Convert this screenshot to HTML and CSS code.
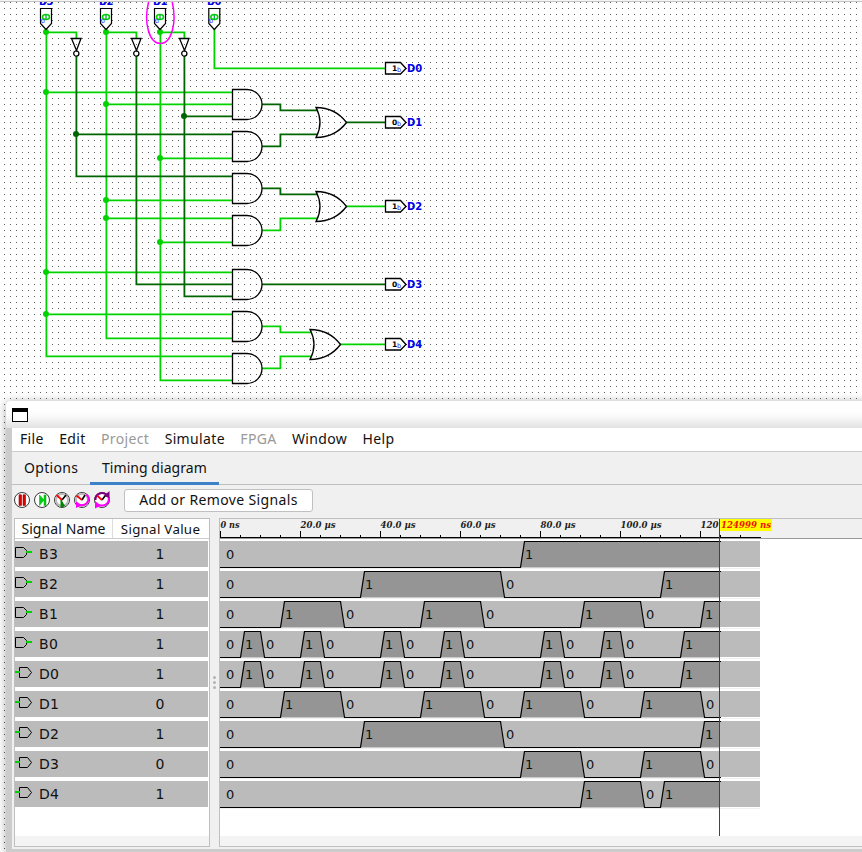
FILE: index.html
```html
<!DOCTYPE html>
<html lang="en">
<head>
<meta charset="utf-8">
<title>Timing diagram</title>
<link rel="stylesheet" href="styles.css">
</head>
<body>
<svg class="circuit" viewBox="0 0 862 401" width="862" height="401">
  <defs>
    <path id="and" d="M.5 -14.5H15a15 15 0 0 1 0 30H.5Z"/>
    <path id="or" d="M0 -14.5Q19 -14.5 30.5 .5Q19 15.5 0 15.5Q8 .5 0 -14.5Z"/>
    <g id="inv"><path d="M-4.5 -11.5H5L.5 .5Z"/><circle cx=".3" cy="3.5" r="2.6"/></g>
    <g id="inpin">
      <path class="shape" d="M-5.5 8.5H5.5V23.5L0 29.5L-5.5 23.5Z"/>
      <ellipse class="ring" cx="0" cy="17" rx="3.5" ry="2.5"/>
      <path class="ringbar" d="M0 14.5V19.5"/>
      <text class="sub" transform="translate(-4.6 23.5) rotate(-20)">b</text>
    </g>
    <path id="outpin" class="pin" d="M.5 -5.5H15.5L21 .5L15.5 6H.5Z"/>
  </defs>
  <g class="labels">
    <text x="39" y="4.5">B3</text><text x="99" y="4.5">B2</text><text x="153" y="4.5">B1</text><text x="207" y="4.5">B0</text>
  </g>
  <rect class="edge" width="862" height="2"/>
  <path class="edgeline" d="M0 1.5H862"/>
  <g class="wire on">
    <path d="M46.4 29V356.4H233M46.4 32.4H76.4V39M46.4 92.4H233M46.4 272.4H233M46.4 314.4H233"/>
    <path d="M106.4 29V338.4H233M106.4 32.4H136.4V39M106.4 104.4H233M106.4 200.4H233M106.4 218.4H233"/>
    <path d="M160.4 29V380.4H233M160.4 32.4H184.4V39M160.4 158.4H233M160.4 242.4H233"/>
    <path d="M214.4 29V68.4H385M262 230.4H280.4V218.4H318M346 206.4H385M262 326.4H280.4V332.4H312M262 368.4H280.4V356.4H312M340 344.4H385"/>
  </g>
  <g class="wire off">
    <path d="M76.4 56V176.4H233M76.4 134.4H233M136.4 56V284.4H233M184.4 56V296.4H233M184.4 116.4H233"/>
    <path d="M262 104.4H280.4V110.4H318M262 146.4H280.4V134.4H318M346 122.4H385M262 188.4H280.4V194.4H318M262 284.4H385"/>
  </g>
  <g class="dot on">
    <circle cx="46" cy="32" r="3"/><circle cx="46" cy="92" r="3"/><circle cx="46" cy="272" r="3"/><circle cx="46" cy="314" r="3"/>
    <circle cx="106" cy="32" r="3"/><circle cx="106" cy="104" r="3"/><circle cx="106" cy="200" r="3"/><circle cx="106" cy="218" r="3"/>
    <circle cx="160" cy="32" r="3"/><circle cx="160" cy="158" r="3"/><circle cx="160" cy="242" r="3"/>
  </g>
  <g class="dot off"><circle cx="184" cy="116" r="3"/><circle cx="76" cy="134" r="3"/></g>
  <g class="gate">
    <use href="#and" x="232" y="104"/><use href="#and" x="232" y="146"/><use href="#and" x="232" y="188"/><use href="#and" x="232" y="230"/>
    <use href="#and" x="232" y="284"/><use href="#and" x="232" y="326"/><use href="#and" x="232" y="368"/>
    <use href="#or" x="316" y="122"/><use href="#or" x="316" y="206"/><use href="#or" x="310" y="344"/>
    <use href="#inv" x="76" y="50"/><use href="#inv" x="136" y="50"/><use href="#inv" x="184" y="50"/>
    <use href="#outpin" x="385" y="68"/><use href="#outpin" x="385" y="122"/><use href="#outpin" x="385" y="206"/><use href="#outpin" x="385" y="284"/><use href="#outpin" x="385" y="344"/>
  </g>
  <use href="#inpin" x="46"/><use href="#inpin" x="106"/><use href="#inpin" x="160"/><use href="#inpin" x="214.3"/>
  <path class="halo" d="M148.6 2C143.5 22 149 43.5 160.4 43.5S177 22 172.2 2"/>
  <g class="bits">
    <text x="392" y="70.5">1</text><text x="392" y="124.5">0</text><text x="392" y="208.5">1</text><text x="392" y="286.5">0</text><text x="392" y="346.5">1</text>
  </g>
  <g class="sub">
    <text x="397" y="72.3">b</text><text x="397" y="126.3">b</text><text x="397" y="210.3">b</text><text x="397" y="288.3">b</text><text x="397" y="348.3">b</text>
  </g>
  <g class="labels">
    <text x="407" y="72">D0</text><text x="407" y="126">D1</text><text x="407" y="210">D2</text><text x="407" y="288">D3</text><text x="407" y="348">D4</text>
  </g>
</svg>

<div class="window">
  <div class="titlebar"><i class="winicon"></i></div>
  <div class="content">
    <nav class="menu"><span>File</span><span>Edit</span><span class="disabled">Project</span><span>Simulate</span><span class="disabled">FPGA</span><span>Window</span><span>Help</span></nav>
    <div class="tabs"><span class="tab">Options</span><span class="tab active">Timing diagram</span></div>
    <div class="toolbar">
      <svg viewBox="0 0 16 16"><circle class="face" cx="8" cy="8" r="7.5"/><path d="M5 2.8h2.5v10.6H5zM9 2.8h2.5v10.6H9z" fill="#e00000" stroke="#900" stroke-width=".6"/></svg>
      <svg viewBox="0 0 16 16"><circle class="face" cx="8" cy="8" r="7.5"/><path d="M5.5 3L10 8l-4.500 5.500zM10 3h2v10.500h-2z" fill="#00cf16" stroke="#0a0" stroke-width=".5"/></svg>
      <svg viewBox="0 0 16 16"><circle class="face" cx="8" cy="8" r="7.500"/><circle class="rim" cx="8" cy="8" r="6"/><path d="M7 8v7l3.500-1z" fill="#008500" stroke="#008500"/><path class="hand" d="M8 8l4-5"/><path class="redhand" d="M2.500 3L8 8"/></svg>
      <svg viewBox="0 0 16 16"><circle class="face" cx="8" cy="8" r="7.500"/><circle class="rim" cx="8" cy="8" r="6"/><path d="M12.500 2.500C17 7 13.500 14.500 5 13" class="loop"/><path d="M2 9.500V16l6-3z" fill="#f0f"/><path class="hand" d="M8 8l3-5"/><path class="redhand" d="M2.500 3.500L8 8"/></svg>
      <svg viewBox="0 0 16 16"><circle class="face" cx="8" cy="8" r="7.500"/><path d="M14.500 5C16 11 11 15 5 13" class="loop"/><path d="M1.500 8C1 2 8-1 13 3" fill="none" stroke="#800080" stroke-width="2"/><path d="M15.500-1v7L9.500 4z" fill="#800080"/><path d="M1 9v7.500l6-3z" fill="#f0f"/><path class="hand" d="M8 8l3-4"/><path class="redhand" d="M3 3.500L8 8"/></svg>
      <button class="btn">Add or Remove Signals</button>
    </div>
    <div class="panes">
      <div class="table">
        <div class="thead"><span>Signal Name</span><span>Signal Value</span></div>
        <div class="rows" id="rows"></div>
        <div class="scroll"></div>
      </div>
      <div class="splitter"><i></i><i></i><i></i></div>
      <div class="chart">
        <svg id="ruler" class="ruler" width="642" height="20"></svg>
        <svg id="waves" class="waves" width="642" height="297"></svg>
        <div class="scroll"></div>
      </div>
    </div>
  </div>
</div>
<script src="app.js"></script>
</body>
</html>
```
FILE: styles.css
```css
body {
  margin: 0;
  width: 862px;
  height: 852px;
  overflow: hidden;
  color: #111;
  font: 14px/20px "Noto Sans", sans-serif;
  background: #fff conic-gradient(from 90deg at 1px 1px, transparent 0 180deg, #606060 180deg 270deg, transparent 270deg) 4px 2px / 6px 6px;
}
.circuit { display: block; }
.edge { fill: #f4f4f4; }
.edgeline { stroke: #c4c4c4; }
.wire { fill: none; stroke-width: 1.8; }
.wire.on { stroke: #00d200; }
.wire.off { stroke: #006400; }
.dot.on { fill: #00d200; }
.dot.off { fill: #006400; }
.gate { fill: none; stroke: #000; stroke-width: 1.3; }
.pin { fill: #fff; }
.shape { fill: #fff; stroke: #000; stroke-width: 1.2; }
.ring { fill: #fff; stroke: #00d200; stroke-width: 1.5; }
.ringbar { stroke: #009c40; stroke-width: 1.2; }
.halo { fill: none; stroke: #f0f; stroke-width: 1.5; }
.labels { font: bold 10px "DejaVu Sans", sans-serif; fill: #0000e8; }
.bits { font: bold 7.5px "DejaVu Sans", sans-serif; }
.sub { font: 6.5px "DejaVu Sans", sans-serif; fill: #2020ff; }

.window {
  display: flex;
  flex-direction: column;
  box-sizing: border-box;
  margin-left: 6px;
  width: 870px;
  height: 451px;
  background: #ccc;
  border-radius: 4px 0 0 0;
  box-shadow: 0 1px 10px rgba(0, 0, 0, .35);
}
.titlebar {
  height: 27px;
  background: linear-gradient(#fff 35%, #fafafa 55%, #e2e2e2);
  border-radius: 4px 0 0 0;
}
.winicon {
  display: block;
  box-sizing: border-box;
  width: 16px;
  height: 14px;
  margin: 7px 0 0 6px;
  border: 1px solid #000;
  border-top-width: 4px;
  background: #fff;
}
.content { margin-left: 6px; height: 421px; background: #f0f0f0; }
.menu {
  display: flex;
  gap: 15.4px;
  height: 23px;
  padding-left: 8px;
  line-height: 22px;
  letter-spacing: .35px;
  background: #fff;
  border-bottom: 1px solid #ccc;
}
.disabled { color: #999; }
.tabs { display: flex; height: 32px; border-bottom: 1px solid #bfbfbf; line-height: 32px; }
.tab { padding: 0 12px; width: 54px; letter-spacing: .3px; }
.tab.active { width: 105px; height: 30px; border-bottom: 3px solid #3d81c8; letter-spacing: .05px; }
.toolbar { display: flex; align-items: center; gap: 4px; height: 31px; padding-left: 2px; margin-bottom: 2px; }
.toolbar svg { width: 16px; height: 16px; margin-bottom: 2px; overflow: visible; }
.face { fill: #fff; stroke: #222; stroke-width: .9; }
.rim { fill: none; stroke: #bbb; stroke-width: 2; }
.hand { stroke: #000; stroke-width: 1.6; }
.redhand { stroke: #f00; stroke-width: 1.7; }
.loop { fill: none; stroke: #f0f; stroke-width: 2; }
.btn {
  box-sizing: border-box;
  width: 189px;
  height: 23px;
  margin-left: 10px;
  padding: 0 0 2px;
  font: inherit;
  letter-spacing: .36px;
  color: #111;
  background: #fff;
  border: 1px solid #c0c0c0;
  border-radius: 3px;
}
.panes { display: flex; height: 329px; }
.table, .chart {
  box-sizing: border-box;
  height: 329px;
  border: 1px solid #bfbfbf;
  background: #fff;
}
.table { width: 196px; margin-left: 2px; overflow: hidden; }
.thead { display: flex; height: 19px; line-height: 20px; border-bottom: 1px solid #ccc; margin-bottom: 2px; }
.thead span { width: 97px; text-align: center; border-right: 1px solid #ddd; letter-spacing: .1px; }
.thead span + span { width: 95px; border: 0; font-size: 13.3px; letter-spacing: .3px; }
.rows { height: 295px; }
.row {
  display: flex;
  width: 193px;
  height: 26px;
  margin-bottom: 4px;
  line-height: 26px;
  background: #bbb;
  font-family: "DejaVu Sans", sans-serif;
}
.row svg { width: 24px; height: 26px; }
.name { width: 73px; letter-spacing: .3px; }
.value { width: 96px; text-align: center; }
.scroll { height: 10px; background: #f4f4f4; }
.splitter {
  display: flex;
  flex-direction: column;
  justify-content: center;
  align-items: center;
  gap: 2px;
  width: 9px;
}
.splitter i { width: 3px; height: 3px; border-radius: 50%; background: #b4b4b4; }
.chart { width: 644px; }
.ruler, .waves { display: block; }
.ruler { background: #f0f0f0; }
.axis { stroke: #000; }
.axisend { stroke: #999; }
.time { font: italic bold 10px "DejaVu Serif", serif; fill: #222; }
.flag { fill: #ff0; }
.flagtext { font: italic bold 10px "DejaVu Serif", serif; fill: #f01000; }
.track { fill: #bbb; }
.high { fill: #959595; }
.trace { fill: none; stroke: #000; stroke-width: 1.2; }
.under { stroke: #f0f0f0; }
.bit { font: 13px "DejaVu Sans", sans-serif; fill: #111; }
.cursor { stroke: #e00000; }
```
FILE: app.js
```js
const B0 = [20, 40, 80, 100, 160, 180, 220, 240, 320, 340, 380, 400, 460];
const signals = [
  { name: 'B3', value: 1, input: true, edges: [300] },
  { name: 'B2', value: 1, input: true, edges: [140, 280, 440] },
  { name: 'B1', value: 1, input: true, edges: [60, 120, 200, 260, 360, 420, 480] },
  { name: 'B0', value: 1, input: true, edges: B0 },
  { name: 'D0', value: 1, edges: B0 },
  { name: 'D1', value: 0, edges: [60, 120, 200, 260, 300, 360, 420, 480] },
  { name: 'D2', value: 1, edges: [140, 280, 480] },
  { name: 'D3', value: 0, edges: [300, 360, 420, 480] },
  { name: 'D4', value: 1, edges: [360, 420, 440] }
];
const END = 500;

const inputIcon = '<svg><path d="M.5 6.5H8.5L11.5 9.5V13.5L8.5 16.5H.5Z" fill="none" stroke="#000"/><path d="M11 11H17" stroke="#00d200" stroke-width="2"/></svg>';
const outputIcon = '<svg><path d="M4.5 6.5H12.5L16.5 11.5L12.5 16.5H4.5Z" fill="none" stroke="#000"/><path d="M0 11H5" stroke="#00d200" stroke-width="2"/></svg>';

document.getElementById('rows').innerHTML = signals.map(s =>
  `<div class="row">${s.input ? inputIcon : outputIcon}<span class="name">${s.name}</span><span class="value">${s.value}</span></div>`
).join('');

let ruler = '<path class="axisend" d="M0 19.5H642"/><path class="axis" d="M0 18.5H541';
for (let x = 0; x <= 520; x += 20) ruler += `M${x + .5} ${x % 80 ? 16 : 12}V19`;
ruler += '"/>';
['0 ns', '20.0 µs', '40.0 µs', '60.0 µs', '80.0 µs', '100.0 µs', '120'].forEach((t, i) => {
  const width = [19, 35, 35, 35, 35, 41, 18][i];
  ruler += `<text class="time" x="${i * 80 + .5}" y="9" textLength="${width}" lengthAdjust="spacingAndGlyphs">${t}</text>`;
});
ruler += `<rect class="flag" x="499" y="0" width="53" height="12"/><text class="flagtext" x="501" y="9" textLength="50" lengthAdjust="spacingAndGlyphs">124999 ns</text><path class="cursor" d="M499.5 0V20"/>`;
document.getElementById('ruler').innerHTML = ruler;

let out = '';
signals.forEach((s, i) => {
  const top = 2 + i * 30, hi = top + .5, lo = top + 26.5;
  out += `<rect class="track" x="0" y="${top}" width="540" height="26"/><path class="under" d="M0 ${top + 27.5}H540"/>`;
  let level = 0, line = `M0 ${lo}`, text = `<text class="bit" x="6" y="${top + 18}">0</text>`;
  s.edges.forEach((x, k) => {
    if (!level) {
      const next = s.edges[k + 1];
      const right = next === undefined ? `H${END}V${lo}` : `H${next}L${next + 4} ${lo}`;
      out += `<path class="high" d="M${x} ${lo}L${x + 4} ${hi}${right}Z"/>`;
    }
    line += level ? `H${x + .5}L${x + 4.5} ${lo}` : `H${x + .5}L${x + 4.5} ${hi}`;
    level = 1 - level;
    text += `<text class="bit" x="${x + (level ? 5 : 6)}" y="${top + 18}">${level}</text>`;
  });
  out += `<path class="trace" d="${line}H${END + 1}"/>` + text;
});
out += '<path class="cursor" d="M499.5 0V297"/>';
document.getElementById('waves').innerHTML = out;
```
